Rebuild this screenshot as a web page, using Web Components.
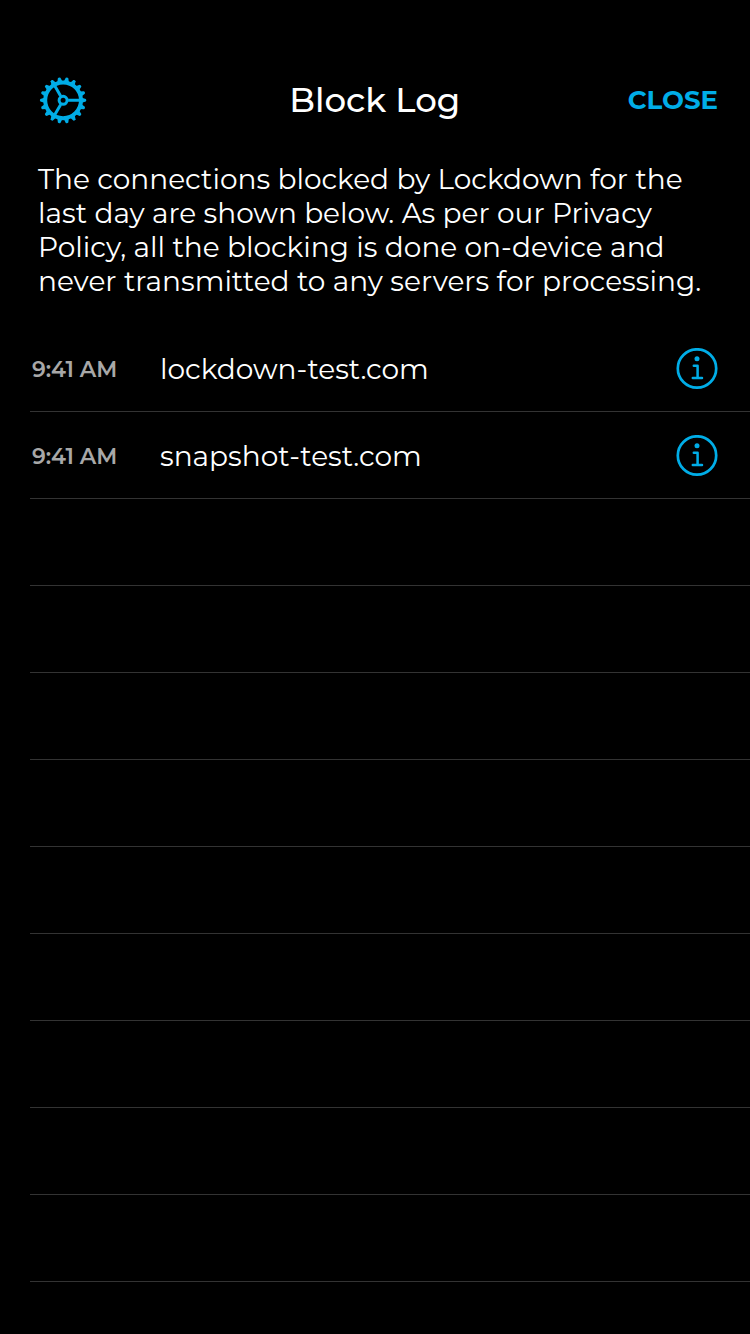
<!DOCTYPE html>
<html lang="en">
<head>
<meta charset="utf-8">
<title>Block Log</title>
<style>
html,body{margin:0;background:#000}
body{font-family:Montserrat,Inter,"Liberation Sans",sans-serif;color:#fff;font-variant-ligatures:none}
</style>
</head>
<body>
<block-log></block-log>
<script>
class GearIcon extends HTMLElement {
  connectedCallback() {
    let teeth = '';
    for (let i = 0; i < 18; i++) teeth += `<path d="M18-2.8 L22.7-1.3 Q23.8 0 22.7 1.3 L18 2.8Z" transform="rotate(${i * 20})"/>`;
    this.attachShadow({mode:'open'}).innerHTML = `<style>:host,svg{display:block;width:48px;height:48px}</style>
    <svg viewBox="-24.1 -24.3 48 48" fill="#00ade7">${teeth}
      <g fill="none" stroke="#00ade7"><circle r="17.9" stroke-width="4"/><circle r="4" stroke-width="3"/>
      <path stroke-width="3" d="M5 0H17M-2.5-4.33L-8.5-14.72M-2.5 4.33L-8.5 14.72"/></g></svg>`;
  }
}
class InfoIcon extends HTMLElement {
  connectedCallback() {
    this.attachShadow({mode:'open'}).innerHTML = `<style>:host,svg{display:block;width:42px;height:42px}</style>
    <svg viewBox="-21 -20.5 42 42" fill="none" stroke="#00ade7" stroke-width="2.7">
      <circle r="19.2"/><circle cy="-9.8" r="2.5" fill="#00ade7" stroke="none"/>
      <path stroke-width="2.5" stroke-linecap="round" stroke-linejoin="round" d="M-3.2-2.8H.6V9.2M-4.2 9.6H5"/></svg>`;
  }
}
class LogRow extends HTMLElement {
  connectedCallback() {
    const d = this.getAttribute('domain');
    this.attachShadow({mode:'open'}).innerHTML = `<style>
      :host{display:flex;box-sizing:border-box;height:87px;margin-left:30px;border-bottom:1px solid #333;align-items:center;padding-right:32px}
      .time{font-size:22px;line-height:30px;font-weight:600;color:#a8a8a8;margin-left:2px;width:128px;padding-top:4px;letter-spacing:-.04px}
      .domain{font-size:28px;line-height:34px;font-weight:400;flex:1;padding-top:1px}
      info-icon{margin-top:1px}
    </style>` + (d ? `<div class="time">9:41 AM</div><div class="domain">${d}</div><info-icon></info-icon>` : '');
  }
}
class BlockLog extends HTMLElement {
  connectedCallback() {
    this.attachShadow({mode:'open'}).innerHTML = `<style>
      :host{display:block;box-sizing:border-box;height:1334px;background:#000;padding-top:70px;overflow:hidden}
      header{display:grid;grid-template-columns:1fr auto 1fr;align-items:center;height:60px;padding:0 32px 0 39px}
      h1{margin:0 0 0 -7.5px;font-size:34px;font-weight:500;line-height:40px}
      .close{justify-self:end;font-size:26px;line-height:30px;font-weight:700;color:#00ade7}
      .copy{padding:32px 0 0 38px;font-size:28px;line-height:34px;font-weight:400;height:163px;white-space:nowrap}
      .last{letter-spacing:.03px}
    </style>
    <header><gear-icon></gear-icon><h1>Block Log</h1><div class="close">CLOSE</div></header>
    <div class="copy">The connections blocked by Lockdown for the<br>last day are shown below. As per our Privacy<br>Policy, all the blocking is done on-device and<br><span class="last">never transmitted to any servers for processing.</span></div>
    <log-row domain="lockdown-test.com"></log-row>
    <log-row domain="snapshot-test.com"></log-row>
    ${'<log-row></log-row>'.repeat(9)}`;
  }
}
customElements.define('gear-icon', GearIcon);
customElements.define('info-icon', InfoIcon);
customElements.define('log-row', LogRow);
customElements.define('block-log', BlockLog);
</script>
</body>
</html>
